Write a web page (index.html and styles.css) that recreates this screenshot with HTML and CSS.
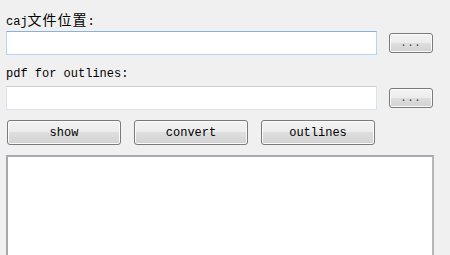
FILE: index.html
```html
<!DOCTYPE html>
<html lang="zh-CN">

<head>
    <meta charset="UTF-8">
    <meta name="viewport" content="width=device-width, initial-scale=1.0">
    <title>caj2pdf</title>
    <link rel="stylesheet" href="styles.css">
</head>

<body>

    <div class="panel">
        <!-- caj source file -->
        <label class="field-label" for="cajPath">caj<span class="cjk">文件位置</span>:</label>
        <div class="field-row">
            <input type="text" class="path-input focused" id="cajPath">
            <button class="browse-btn" id="browseCaj">...</button>
        </div>

        <!-- pdf used for outlines -->
        <label class="field-label second" for="pdfPath">pdf for outlines:</label>
        <div class="field-row">
            <input type="text" class="path-input" id="pdfPath">
            <button class="browse-btn" id="browsePdf">...</button>
        </div>

        <!-- actions -->
        <div class="action-row">
            <button class="action-btn" id="showBtn">show</button>
            <button class="action-btn" id="convertBtn">convert</button>
            <button class="action-btn" id="outlinesBtn">outlines</button>
        </div>

        <textarea class="log" id="log"></textarea>
    </div>

</body>

</html>
```

FILE: styles.css
```css
* {
    box-sizing: border-box;
    margin: 0;
    padding: 0;
}

html,
body {
    height: 100%;
}

body {
    font-family: 'Liberation Mono', 'Noto Sans CJK SC', monospace;
    font-size: 12px;
    background-color: #f0f0f0;
    color: #000;
    overflow: hidden;
}

.panel {
    display: flex;
    flex-direction: column;
    width: 434px;
    height: 100%;
    padding: 10px 0 0 6px;
    overflow: hidden;
}

.field-label {
    display: block;
    height: 18px;
    line-height: 18px;
    margin-bottom: 3px;
    flex-shrink: 0;
}

.field-label.second {
    margin-top: 10px;
}

.cjk {
    font-family: 'Noto Sans CJK SC', sans-serif;
    font-size: 14px;
    letter-spacing: 1px;
}

.field-row {
    display: flex;
    align-items: center;
    gap: 12px;
    height: 24px;
    flex-shrink: 0;
}

.path-input {
    width: 371px;
    height: 24px;
    background-color: #fff;
    border: 1px solid #dde2e8;
    border-top-color: #c9ccd1;
    outline: none;
}

.path-input.focused {
    border-color: #b7d4f0;
    border-top-color: #86b2dc;
}

.browse-btn {
    width: 44px;
    height: 20px;
    font-family: inherit;
    font-size: 10px;
    letter-spacing: 1px;
    line-height: 14px;
    padding-top: 2px;
    color: #333;
    border: 1px solid #7a7a7a;
    border-radius: 3px;
    background: linear-gradient(#f3f3f3 0%, #ececec 50%, #dedede 50%, #d2d2d2 100%);
    box-shadow: inset 0 0 0 1px #fbfbfb;
    cursor: pointer;
}

.action-row {
    display: flex;
    gap: 13px;
    margin: 10px 0 0 1px;
    flex-shrink: 0;
}

.action-btn {
    width: 114px;
    height: 25px;
    font-family: inherit;
    font-size: 12px;
    color: #000;
    border: 1px solid #7a7a7a;
    border-radius: 3px;
    background: linear-gradient(#f3f3f3 0%, #ececec 50%, #dedede 50%, #d2d2d2 100%);
    box-shadow: inset 0 0 0 1px #fbfbfb;
    cursor: pointer;
}

.log {
    width: 428px;
    height: 130px;
    flex-shrink: 0;
    margin-top: 10px;
    background-color: #fff;
    border: 2px solid #a6a9ae;
    border-right-color: #b4b6ba;
    resize: none;
    outline: none;
}
```
